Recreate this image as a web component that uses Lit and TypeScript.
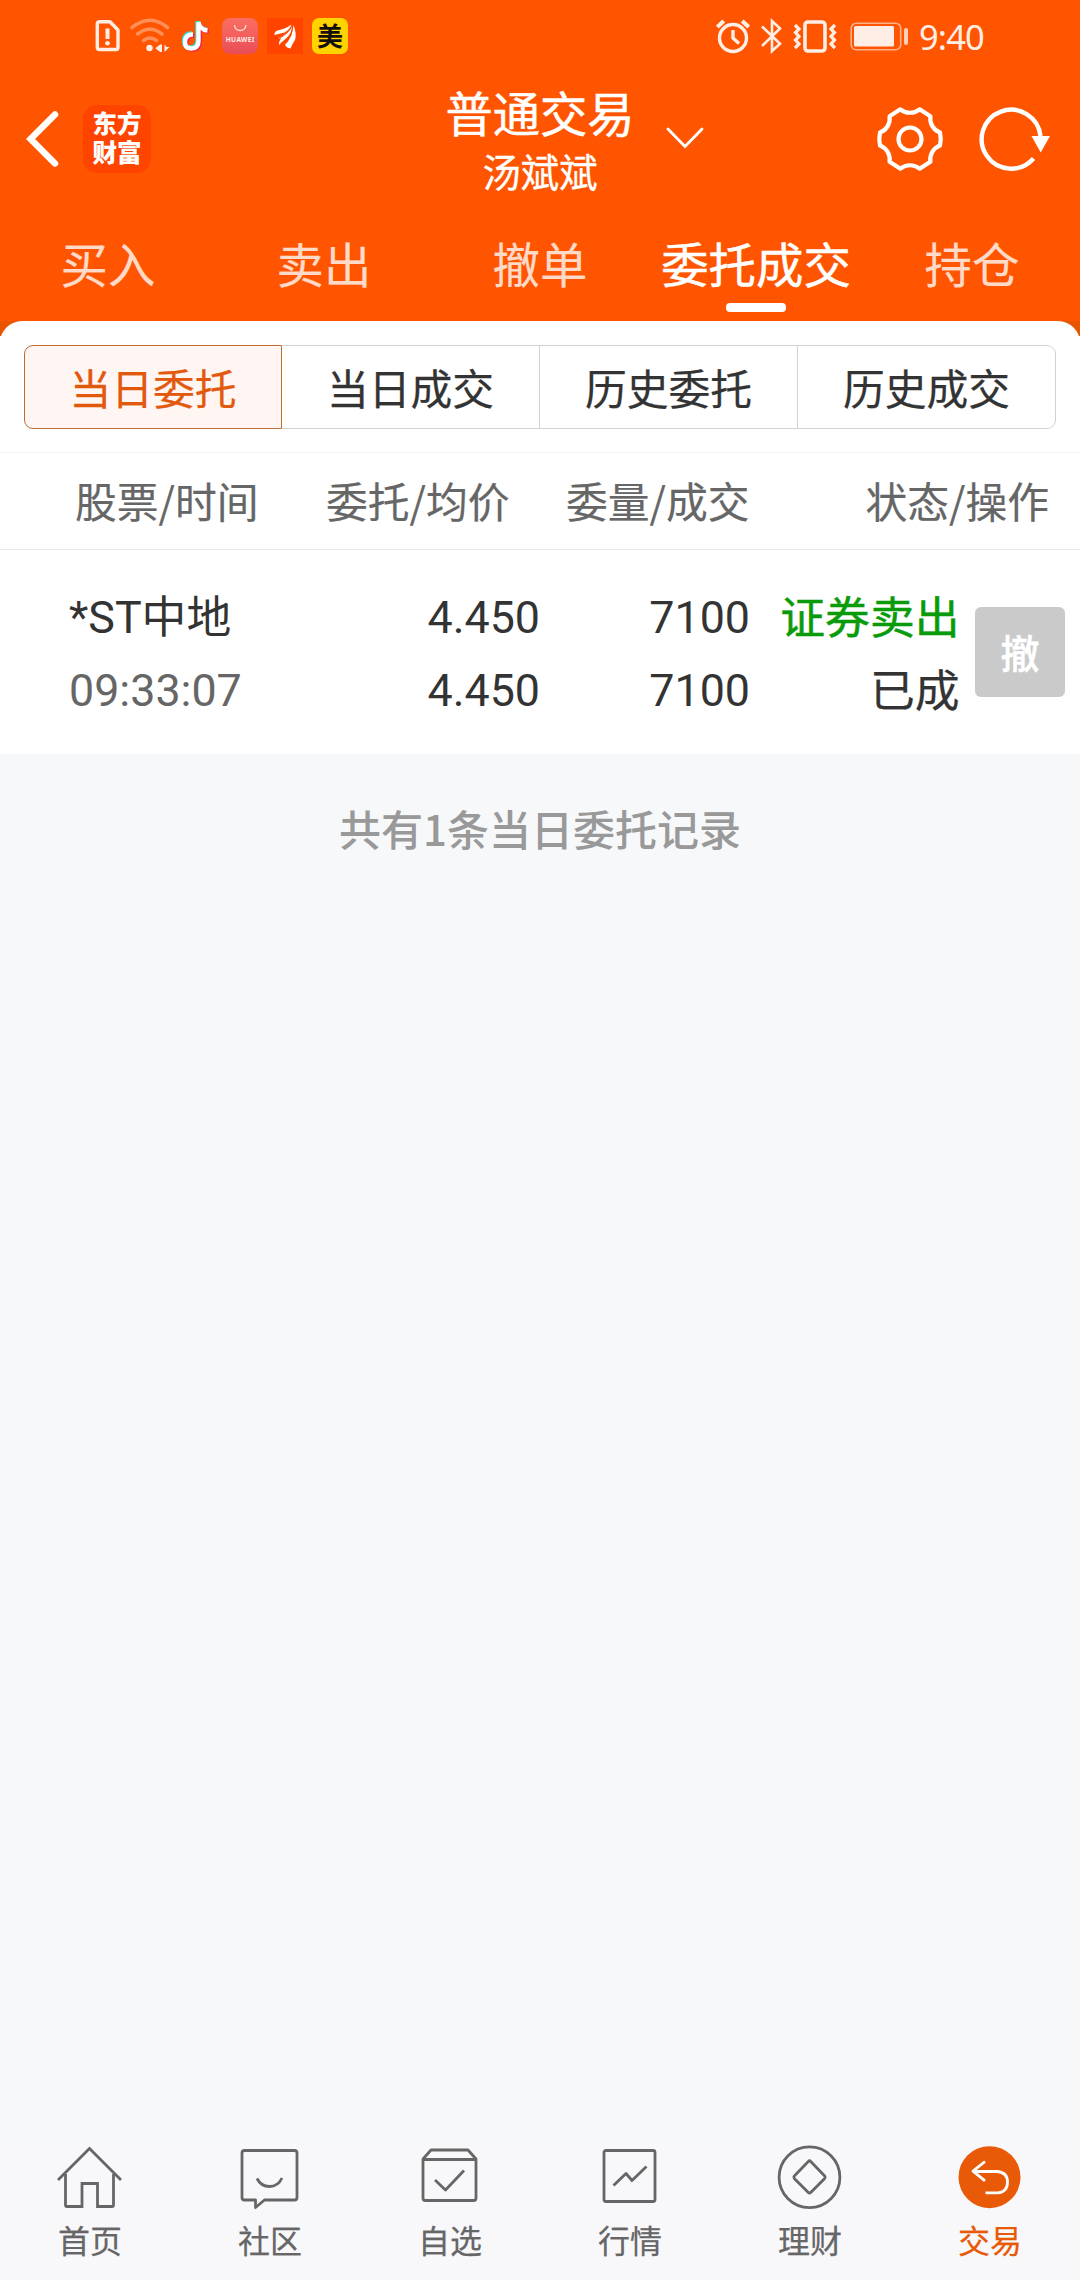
import { LitElement, html, css, svg } from "lit";
import { customElement, property } from "lit/decorators.js";
import { classMap } from "lit/directives/class-map.js";

@customElement("status-bar")
class StatusBar extends LitElement {
  static styles = css`
    :host { display: block; }
    .bar { display: flex; align-items: center; height: 72px; padding: 0 95px 0 96px; color: #ffeee6; box-sizing: border-box; }
    .bar svg { display: block; flex: none; overflow: visible; }
    .doc { margin-right: 9px; }
    .wifi { margin-right: 10px; }
    .tiktok { margin-right: 12px; }
    .store { margin-right: 9px; }
    .east { margin-right: 9px; }
    .space { flex: 1; }
    .alarm { margin-right: 10px; }
    .bt { margin-right: 10px; }
    .vibrate { margin-right: 13px; }
    .time { width: 66px; margin-left: 10px; font: 34.5px/40px "Noto Sans", sans-serif; white-space: nowrap; letter-spacing: -0.9px; padding-top: 2px; }
    .brand { font: 700 6.6px "Noto Sans", sans-serif; letter-spacing: 0.3px; }
    .mei { font: 700 26px "Noto Sans CJK SC", sans-serif; }
  `;
  render() {
    return html`<div class="bar">
      <svg class="doc" width="25" height="36" viewBox="0.5 0 25 36" fill="none" stroke="currentColor" stroke-width="3.4" stroke-linejoin="round">
        <path d="M4 3.7h10.5l8 8.3v17.500q0 2-2 2h-16.500q-2.200 0-2.200-2.200v-23.500q0-2.100 2.200-2.100z" /><path d="M12 10.500v10.500" stroke-width="4" /><circle cx="12" cy="25.300" r="2.300" fill="currentColor" stroke="none" />
      </svg>
      <svg class="wifi" width="41" height="36" viewBox="0 0 41 36" fill="none" stroke-linecap="round" stroke-width="3.600">
        <g stroke="#ff9057"><path d="M2 9.500q18-14.500 35.500 0" /><path d="M7.500 16q12.500-9.500 24.500 0" /><path d="M13.500 22.500q6.500-5 13 0" /></g>
        <circle cx="19.500" cy="30" r="3.200" fill="#ffeee6" /><path d="M32 26.500v7.500h-1.800l-5-3.800 5-3.700zM34.500 26.500v7.500l5-5h-3z" fill="#ffeee6" />
      </svg>
      <svg class="tiktok" width="29" height="36" viewBox="0 0 29 36" fill="none" stroke-width="4.400">
        <g transform="translate(-1 -1)" stroke="#28e6e0"><path d="M12 16.500q-8 0-8 7.500 0 6.500 6.500 6.500 7 0 7-7.500v-18" /><path d="M17.500 4q1 7.500 9 8.500" /></g>
        <g transform="translate(1.200 1)" stroke="#f0204f"><path d="M12 16.500q-8 0-8 7.500 0 6.500 6.500 6.500 7 0 7-7.500v-18" /><path d="M17.500 4q1 7.500 9 8.500" /></g>
        <g stroke="#fff"><path d="M12 16.500q-8 0-8 7.500 0 6.500 6.500 6.500 7 0 7-7.500v-18" /><path d="M17.500 4q1 7.500 9 8.500" /></g>
      </svg>
      <svg class="store" width="36" height="36" viewBox="0 0 36 36">
        <defs><linearGradient id="g" x2="0" y2="1"><stop stop-color="#fa6f61" /><stop offset="1" stop-color="#e94d58" /></linearGradient></defs>
        <rect width="36" height="36" rx="8" fill="url(#g)" /><path d="M12.500 7q.5 5.500 5.700 5.500t5.700-5.500" fill="none" stroke="#ffd5ce" stroke-width="1.400" />
        <text class="brand" x="18.200" y="23.500" text-anchor="middle" textLength="29" fill="#ffeae6">HUAWEI</text>
      </svg>
      <svg class="east" width="36" height="36" viewBox="0 0 36 36"><rect width="36" height="36" fill="#ff4400" />
        <g fill="#fff"><path d="M7.500 17q-.5-3.500 3-4.500 8-1.500 14-6-2 5.500-7 8-5 1-10 2.500z" /><path d="M11 20.500q10-4.500 14.500-13-1 8.500-6.500 13-4.500 3.500-7 6.500-.5-4 2.500-6.500z" /><path d="M18 26.500q7.500-7 8.500-19.500 3.500 9 1.500 15-2.500 3.500-4.500 8.500-4.500-.5-5.500-4z" /></g>
        <path d="M12 20.500q9-4.500 13.500-13M19 25.500q6.500-8 7-18" fill="none" stroke="#ff4400" stroke-width="0.900" />
      </svg>
      <svg width="36" height="36" viewBox="0 0 36 36"><rect width="36" height="36" rx="7" fill="#ffd300" /><text class="mei" x="18" y="27.500" text-anchor="middle" fill="#15110a">美</text></svg>
      <span class="space"></span>
      <svg class="alarm" width="34" height="36" viewBox="0 0 34 36" fill="none" stroke="currentColor" stroke-width="3.400"><circle cx="17" cy="20" r="13.500" /><path d="M17 12v8l6 5.500" /><path d="M1.300 9l6.500-6M32.700 9l-6.500-6" stroke-width="4" /></svg>
      <svg class="bt" width="23" height="36" viewBox="0 0 23 36" fill="none" stroke="currentColor" stroke-width="2.600"><path d="M2 8.500l18 17.300-8 7.200v-30l8 7.500-18 17.500" /></svg>
      <svg class="vibrate" width="44" height="36" viewBox="0 0 44 36" fill="none" stroke="currentColor" stroke-width="3.600"><rect x="12" y="4" width="20" height="29" rx="3" /><path stroke-width="3.200" d="M2 7l4 4-3.500 3.500 3.500 4-3.500 3.500 3.500 4-4 4M42 7l-4 4 3.500 3.500-3.500 4 3.500 3.500-3.500 4 4 4" /></svg>
      <svg width="59" height="36" viewBox="0 0 59 36"><rect x="1.200" y="5.200" width="49.500" height="26.500" rx="5" fill="none" stroke="#ffb088" stroke-width="1.600" /><rect x="4" y="8" width="40" height="20.500" rx="1.500" fill="#ffeee6" /><rect x="54" y="10" width="4" height="17" rx="2" fill="#ffd0b8" /></svg>
      <span class="time">9:40</span>
    </div>`;
  }
}

@customElement("nav-item")
class NavItem extends LitElement {
  @property() label = "";
  @property() icon = "";
  @property({ type: Boolean }) active = false;
  static styles = css`
    :host { display: block; flex: 1; }
    .item { display: flex; flex-direction: column; align-items: center; color: #666; }
    .active { color: #e85908; }
    .label { font: 32px/44px "Noto Sans CJK SC", sans-serif; margin-top: 3px; -webkit-text-stroke: 0.25px currentColor; }
    svg { display: block; transform: translateX(-0.5px); }
  `;
  private glyph() {
    switch (this.icon) {
      case "home":
        return svg`<path d="M4.500 38l31.500-31.500 31.500 31.500" stroke-linejoin="miter"/><path d="M12 32v31.500q0 1 1 1h15.500v-23h15.500v23h15q1 0 1-1v-31.500" stroke-linejoin="miter"/>`;
      case "chat":
        return svg`<path d="M11 8.500h50q2.500 0 2.500 2.500v44.500q0 2.500-2.500 2.500h-30l-9 7.500v-7.500h-11q-2.500 0-2.500-2.500v-44.500q0-2.500 2.500-2.500z"/><path d="M23.500 36.500q4 8 12.500 8t12.500-8.500"/>`;
      case "box":
        return svg`<path d="M9.500 17l8-9h37l8 9v39q0 2.500-2.500 2.500h-48q-2.500 0-2.500-2.500zM9.500 17.500h53"/><path d="M21.500 38l10.500 10 18.500-19.500"/>`;
      case "chart":
        return svg`<rect x="10.500" y="8.500" width="51" height="51" rx="2"/><path d="M20 43.500l12.500-12 6 7 14.500-14"/>`;
      case "coin":
        return svg`<circle cx="36" cy="35.200" r="30.400"/><path d="M34.800 19.500q1.200-1.500 2.400 0l14 14.500q1 1.200 0 2.400l-14 14q-1.200 1.200-2.400 0l-14-14q-1-1.200 0-2.400z"/>`;
      default:
        return svg`<circle cx="36" cy="35.200" r="31" fill="currentColor" stroke="none"/><g stroke="#fff"><path d="M31.500 19.500l-12 9.700 12 9.700M20 29.500h24q10 1 10 10.700t-10 10.700h-12"/></g>`;
    }
  }
  render() {
    return html`<div class=${classMap({ item: true, active: this.active })}>
      <svg width="72" height="72" viewBox="0 0 72 72" fill="none" stroke="currentColor" stroke-width="2.800" stroke-linejoin="round">${this.glyph()}</svg>
      <span class="label">${this.label}</span>
    </div>`;
  }
}

@customElement("app-root")
class AppRoot extends LitElement {
  static styles = css`
    :host { display: block; font-family: Roboto, "Noto Sans CJK SC", sans-serif; color: #333; }
    * { box-sizing: border-box; }
    svg { display: block; flex: none; }
    .page { display: flex; flex-direction: column; height: 2280px; background: #f7f8fa; }
    .head { background: #ff5500; height: 321px; color: #fff; flex: none; }
    .top { display: grid; grid-template-columns: 1fr auto 1fr; align-items: center; height: 134px; }
    .left { display: flex; align-items: center; padding-left: 26px; }
    .logo { margin-left: 24px; width: 68px; height: 68px; border-radius: 14px; background: #ff4400; padding: 3px 0 0 0; text-align: center; font: 900 24.500px/29px "Noto Sans CJK SC", sans-serif; }
    .title { font: 47.300px/56px "Noto Sans CJK SC", sans-serif; text-align: center; -webkit-text-stroke: 0.5px currentColor; padding-top: 6px; }
    .name { font: 38.300px/58px "Noto Sans CJK SC", sans-serif; text-align: center; -webkit-text-stroke: 0.3px currentColor; padding-top: 2px; }
    .right { display: flex; align-items: center; padding: 0 28px 0 31px; }
    .gap { flex: 1; }
    .gear { margin-right: 33px; }
    .tabs { display: grid; grid-template-columns: repeat(5, 216px); height: 115px; }
    .tab { display: flex; flex-direction: column; align-items: center; font: 47.400px/56px "Noto Sans CJK SC", sans-serif; color: #ffdac8; padding-top: 29px; -webkit-text-stroke: 0.2px currentColor; }
    .tab.on { color: #fff; -webkit-text-stroke: 0.5px currentColor; }
    .tab.on::after { content: ""; width: 60px; height: 9px; border-radius: 4px; background: #fff; margin-top: 12px; }
    .panel { background: linear-gradient(#e85400 15px, #fff 15px); flex: none; }
    .sheet { background: #fff; border-radius: 22px 22px 0 0; height: 433px; }
    .segwrap { padding: 24px 24px 0; height: 132px; border-bottom: 1px solid #f5f5f5; }
    .segs { display: grid; grid-template-columns: repeat(4, 1fr); height: 84px; }
    .seg { border: 1px solid #d0d3d3; border-left-width: 0; font: 41.800px/82px "Noto Sans CJK SC", sans-serif; text-align: center; -webkit-text-stroke: 0.25px currentColor; }
    .seg.on { border: 1px solid #bd6c33; border-radius: 9px 0 0 9px; background: #fff6f3; color: #e2590e; }
    .seg:last-child { border-radius: 0 9px 9px 0; }
    .cols { display: flex; height: 97px; border-bottom: 1px solid #e9e9e9; font: 41.800px/95px "Noto Sans CJK SC", sans-serif; color: #666; padding: 0 31px 0 75px; -webkit-text-stroke: 0.2px currentColor; }
    .c1 { width: 251px; } .c2 { width: 240px; } .c3 { flex: 1; }
    .row { display: flex; padding: 31px 15px 0 69px; font-size: 44.800px; line-height: 73px; white-space: nowrap; }
    .col { text-align: right; }
    .stock { width: 200px; text-align: left; }
    .price { width: 271px; } .amount { width: 210px; } .state { width: 209.500px; padding-top: 0.500px; -webkit-text-stroke: 0.25px currentColor; }
    .time { color: #666; }
    .sell { color: #0a9b0a; -webkit-text-stroke: 0.5px currentColor; }
    .undo { width: 90px; height: 90px; margin: 26px 0 0 15.500px; border-radius: 6px; background: #cacaca; color: #fff; font: 500 39px/88px "Noto Sans CJK SC", sans-serif; text-align: center; -webkit-text-stroke: 0.5px currentColor; }
    .count { font: 500 42px/60px "Noto Sans CJK SC", sans-serif; color: #999; text-align: center; margin-top: 44px; }
    .fill { flex: 1; }
    .nav { display: flex; height: 138px; flex: none; background: #f8f8fb; }
  `;
  render() {
    const tabs = ["买入", "卖出", "撤单", "委托成交", "持仓"];
    const segs = ["当日委托", "当日成交", "历史委托", "历史成交"];
    const nav = [["首页", "home"], ["社区", "chat"], ["自选", "box"], ["行情", "chart"], ["理财", "coin"], ["交易", "trade"]];
    return html`<div class="page">
      <header class="head">
        <status-bar></status-bar>
        <div class="top">
          <div class="left">
            <svg width="33" height="58" viewBox="0 0 33 58" fill="none" stroke="#fff" stroke-width="6.500" stroke-linecap="round"><path d="M29 4.500l-24.500 24.500 24.500 24.500" /></svg>
            <div class="logo">东方<br />财富</div>
          </div>
          <div><div class="title">普通交易</div><div class="name">汤斌斌</div></div>
          <div class="right">
            <svg width="38" height="24" viewBox="0 0 38 24" fill="none" stroke="#fff" stroke-width="2.800" stroke-linecap="round"><path d="M2 2l17 17.500 17-17.500" /></svg>
            <span class="gap"></span>
            <svg class="gear" width="70" height="70" viewBox="-35 -35 70 70" fill="none" stroke="#fff" stroke-width="4.200" stroke-linejoin="round">
              <path d="M30-6.500Q31.500 0 30 6.500A15 15 0 0 0 20.400 22.700L9.600 29.700A15 15 0 0 0-9.600 29.700L-20.400 22.700A15 15 0 0 0-30 6.500Q-31.500 0-30-6.500A15 15 0 0 0-20.400-22.700L-9.600-29.700A15 15 0 0 0 9.600-29.700L20.400-22.700A15 15 0 0 0 30-6.500z" /><circle r="11.500" />
            </svg>
            <svg width="74" height="70" viewBox="-33 -35 74 70" fill="none" stroke="#fff" stroke-width="4.400" stroke-linecap="butt"><path d="M22.500 19.500A29.500 29.500 0 1 1 29.500-3" /><path d="M20.500-3h18.500l-9.300 16.500z" fill="#fff" stroke="none" /></svg>
          </div>
        </div>
        <nav class="tabs">${tabs.map((t, i) => html`<div class=${classMap({ tab: true, on: i === 3 })}>${t}</div>`)}</nav>
      </header>
      <section class="panel"><div class="sheet">
        <div class="segwrap"><div class="segs">${segs.map((s, i) => html`<div class=${classMap({ seg: true, on: i === 0 })}>${s}</div>`)}</div></div>
        <div class="cols"><span class="c1">股票/时间</span><span class="c2">委托/均价</span><span class="c3">委量/成交</span><span>状态/操作</span></div>
        <div class="row">
          <div class="col stock"><div>*ST中地</div><div class="time">09:33:07</div></div>
          <div class="col price"><div>4.450</div><div>4.450</div></div>
          <div class="col amount"><div>7100</div><div>7100</div></div>
          <div class="col state"><div class="sell">证券卖出</div><div>已成</div></div>
          <div class="undo">撤</div>
        </div>
      </div></section>
      <div class="count">共有1条当日委托记录</div>
      <div class="fill"></div>
      <footer class="nav">${nav.map(([l, k], i) => html`<nav-item label=${l} icon=${k} ?active=${i === 5}></nav-item>`)}</footer>
    </div>`;
  }
}
